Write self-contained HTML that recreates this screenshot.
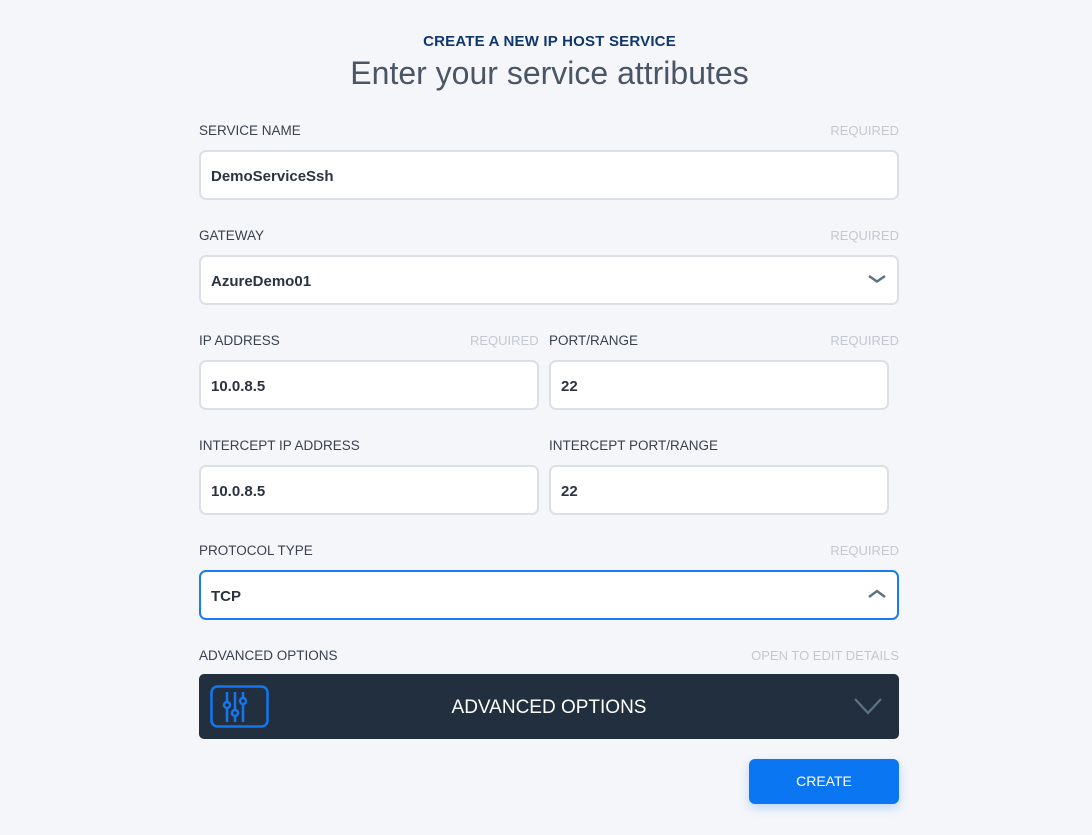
<!DOCTYPE html>
<html><head><style>
*{box-sizing:border-box;margin:0;padding:0}
body{width:1092px;height:835px;background:#f5f6fa;font-family:"Liberation Sans",sans-serif;position:relative;overflow:hidden}
.a{position:absolute}
.t1{left:0;width:1099px;top:33px;text-align:center;font-weight:bold;font-size:15px;color:#10366e;letter-spacing:0.2px}
.t2{left:0;width:1099px;top:55px;text-align:center;font-size:32px;color:#4a5566;font-weight:300}
.lbl{font-size:13.5px;color:#39414f}
.req{font-size:13px;color:#c3c8d0}
.in{background:#fff;border:2px solid #dcdfe5;border-radius:7px;height:50px;font-size:15px;color:#2b3340;padding:16px 10px 0;font-weight:bold}
.chev{position:absolute;right:10px;top:14px}
</style></head><body>
<div class="a t1">CREATE A NEW IP HOST SERVICE</div>
<div class="a t2">Enter your service attributes</div>

<div class="a lbl" style="left:199px;top:123px">SERVICE NAME</div>
<div class="a req" style="right:193px;top:123px">REQUIRED</div>
<div class="a in" style="left:199px;top:150px;width:700px">DemoServiceSsh</div>

<div class="a lbl" style="left:199px;top:228px">GATEWAY</div>
<div class="a req" style="right:193px;top:228px">REQUIRED</div>
<div class="a in" style="left:199px;top:255px;width:700px">AzureDemo01<svg class="chev" width="20" height="16" viewBox="0 0 20 16"><path d="M2 5 L10 10.5 L18 5" stroke="#5b7485" stroke-width="2.5" fill="none"/></svg></div>

<div class="a lbl" style="left:199px;top:333px">IP ADDRESS</div>
<div class="a req" style="left:470px;top:333px">REQUIRED</div>
<div class="a in" style="left:199px;top:360px;width:340px">10.0.8.5</div>
<div class="a lbl" style="left:549px;top:333px">PORT/RANGE</div>
<div class="a req" style="right:193px;top:333px">REQUIRED</div>
<div class="a in" style="left:549px;top:360px;width:340px">22</div>

<div class="a lbl" style="left:199px;top:438px">INTERCEPT IP ADDRESS</div>
<div class="a in" style="left:199px;top:465px;width:340px">10.0.8.5</div>
<div class="a lbl" style="left:549px;top:438px">INTERCEPT PORT/RANGE</div>
<div class="a in" style="left:549px;top:465px;width:340px">22</div>

<div class="a lbl" style="left:199px;top:543px">PROTOCOL TYPE</div>
<div class="a req" style="right:193px;top:543px">REQUIRED</div>
<div class="a in" style="left:199px;top:570px;width:700px;border-color:#1a7cf0">TCP<svg class="chev" width="20" height="16" viewBox="0 0 20 16"><path d="M2 11 L10 5 L18 11" stroke="#5b7485" stroke-width="2.5" fill="none"/></svg></div>

<div class="a lbl" style="left:199px;top:648px">ADVANCED OPTIONS</div>
<div class="a req" style="right:193px;top:648px">OPEN TO EDIT DETAILS</div>
<div class="a" style="left:199px;top:674px;width:700px;height:65px;background:#222f3e;border-radius:5px">
<svg style="position:absolute;left:11px;top:11px" width="60" height="44" viewBox="0 0 60 44"><rect x="1.5" y="1.5" width="56" height="40" rx="6" fill="none" stroke="#1576f0" stroke-width="2.5"/>
<g stroke="#1576f0" stroke-width="2.5" fill="none"><path d="M17 7V17M17 23V37M25 7V25M25 31V37M33 7V13M33 19V37"/><circle cx="17" cy="20" r="3"/><circle cx="25" cy="28" r="3"/><circle cx="33" cy="16" r="3"/></g></svg>
<div style="position:absolute;left:0;width:700px;top:23px;text-align:center;color:#fff;font-size:19px">ADVANCED OPTIONS</div>
<svg style="position:absolute;right:16px;top:23px" width="30" height="18" viewBox="0 0 30 18"><path d="M2 2 L15 16 L28 2" stroke="#5b7485" stroke-width="2.2" fill="none"/></svg>
</div>

<div class="a" style="left:749px;top:759px;width:150px;height:45px;background:#0a76f2;border-radius:6px;color:#fff;font-size:14px;text-align:center;line-height:45px;box-shadow:0 4px 10px rgba(10,118,242,0.25)">CREATE</div>
</body></html>
